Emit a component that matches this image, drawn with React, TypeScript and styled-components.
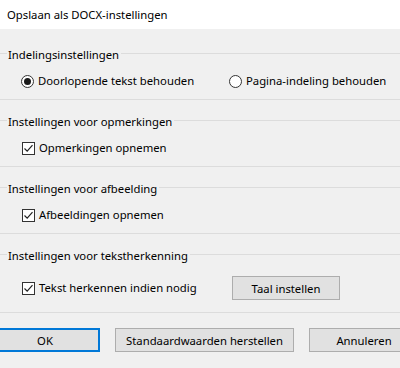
import React, { FC } from "react";
import styled, { createGlobalStyle } from "styled-components";

const GlobalStyle = createGlobalStyle`
  html, body {
    margin: 0;
    padding: 0;
    background: #f0f0f0;
  }
  body {
    font-family: "Noto Sans", "Liberation Sans", sans-serif;
    font-size: 11.3px;
    color: #000000;
  }
`;

const Dialog = styled.div`
  width: 400px;
  height: 368px;
  overflow: hidden;
  background: #f0f0f0;
`;

const TitleBar = styled.div`
  height: 29px;
  line-height: 29px;
  padding-left: 7px;
  background: #ffffff;
`;

const Body = styled.div`
  padding-top: 4px;
`;

const Section = styled.div`
  border-bottom: 1px solid #dcdcdc;
`;

const GroupHeader = styled.div`
  display: flex;
  align-items: center;
  height: 16px;
  line-height: 16px;
  margin-top: 14px;

  &::before,
  &::after {
    content: "";
    height: 1px;
    background: #dcdcdc;
    margin-top: -4px;
  }
  &::before {
    width: 7px;
  }
  &::after {
    flex: 1;
  }

  span {
    padding: 0 2px 0 1px;
    white-space: nowrap;
  }
`;

const Row = styled.div<{ $cols?: string; $pad?: number }>`
  display: grid;
  grid-template-columns: ${(p) => p.$cols ?? "auto"};
  justify-content: start;
  align-items: center;
  padding: ${(p) => p.$pad ?? 10}px 0 ${(p) => p.$pad ?? 10}px 21px;
  min-height: 16px;
`;

const Option = styled.label`
  display: flex;
  align-items: center;
  gap: 4px;
  line-height: 16px;
  white-space: nowrap;
`;

const RadioMark = styled.span<{ $on?: boolean }>`
  box-sizing: border-box;
  width: 13px;
  height: 13px;
  border-radius: 50%;
  border: 1px solid #333333;
  background: #ffffff;
  display: flex;
  align-items: center;
  justify-content: center;

  &::after {
    content: "";
    display: ${(p) => (p.$on ? "block" : "none")};
    width: 7px;
    height: 7px;
    border-radius: 50%;
    background: #1a1a1a;
  }
`;

const CheckMark = styled.span`
  box-sizing: border-box;
  width: 13px;
  height: 13px;
  border: 1px solid #333333;
  background: #ffffff;
  display: flex;
  margin-left: 1px;
`;

const Button = styled.button<{ $w: number; $default?: boolean }>`
  box-sizing: border-box;
  width: ${(p) => p.$w}px;
  height: 24px;
  padding: 0;
  font-family: inherit;
  font-size: inherit;
  color: #000000;
  background: #e1e1e1;
  border: ${(p) => (p.$default ? "2px solid #0078d7" : "1px solid #adadad")};
  flex-shrink: 0;
`;

const ButtonRow = styled.div`
  display: flex;
  gap: 15px;
  margin-top: 15px;
  margin-left: -10px;
`;

const Radio: FC<{ on?: boolean; label: string }> = ({ on, label }) => (
  <Option>
    <RadioMark $on={on} />
    {label}
  </Option>
);

const Check: FC<{ label: string }> = ({ label }) => (
  <Option>
    <CheckMark>
      <svg width="11" height="11" viewBox="0 0 11 11">
        <path d="M1.5 5.5 L4.2 8.2 L9.5 2.2" fill="none" stroke="#222" strokeWidth="1.2" />
      </svg>
    </CheckMark>
    {label}
  </Option>
);

const App: FC = () => {
  return (
    <>
      <GlobalStyle />
      <Dialog>
        <TitleBar>Opslaan als DOCX-instellingen</TitleBar>
        <Body>
          <Section>
            <GroupHeader>
              <span>Indelingsinstellingen</span>
            </GroupHeader>
            <Row $cols="208px auto">
              <Radio on label="Doorlopende tekst behouden" />
              <Radio label="Pagina-indeling behouden" />
            </Row>
          </Section>
          <Section>
            <GroupHeader>
              <span>Instellingen voor opmerkingen</span>
            </GroupHeader>
            <Row>
              <Check label="Opmerkingen opnemen" />
            </Row>
          </Section>
          <Section>
            <GroupHeader>
              <span>Instellingen voor afbeelding</span>
            </GroupHeader>
            <Row>
              <Check label="Afbeeldingen opnemen" />
            </Row>
          </Section>
          <Section>
            <GroupHeader>
              <span>Instellingen voor tekstherkenning</span>
            </GroupHeader>
            <Row $cols="211px auto" $pad={12}>
              <Check label="Tekst herkennen indien nodig" />
              <Button $w={108}>Taal instellen</Button>
            </Row>
          </Section>
          <ButtonRow>
            <Button $w={110} $default>
              OK
            </Button>
            <Button $w={179}>Standaardwaarden herstellen</Button>
            <Button $w={110}>Annuleren</Button>
          </ButtonRow>
        </Body>
      </Dialog>
    </>
  );
};

export default App;
